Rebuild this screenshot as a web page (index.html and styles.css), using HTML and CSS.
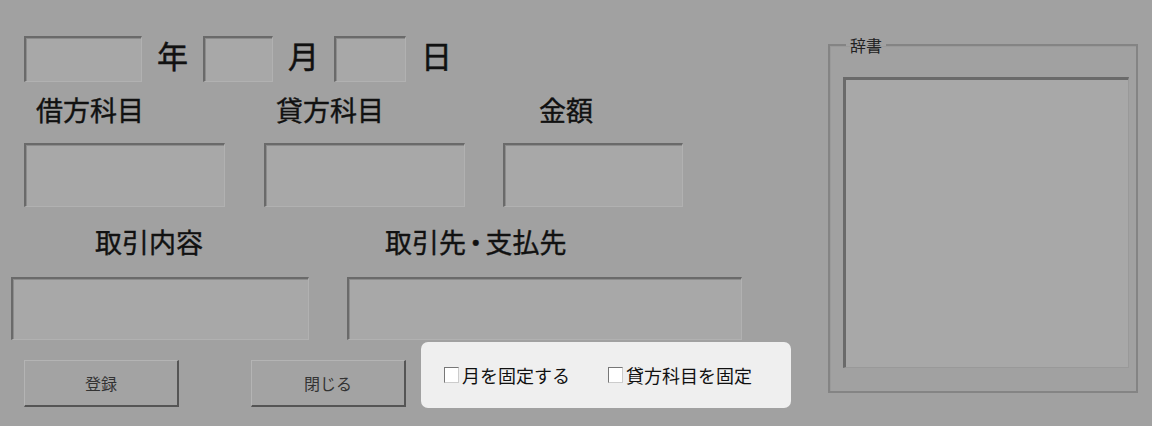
FILE: index.html
```html
<!DOCTYPE html>
<html lang="ja">
  <head>
    <meta charset="utf-8">
    <title>仕訳入力</title>
    <link rel="stylesheet" href="styles.css">
  </head>
  <body>
    <div class="window">
      <div class="main">
        <div class="row date-row">
          <div class="field year"></div>
          <span class="unit">年</span>
          <div class="field month"></div>
          <span class="unit">月</span>
          <div class="field day"></div>
          <span class="unit">日</span>
        </div>
        <div class="row label-row">
          <div class="col col-a"><span class="label">借方科目</span></div>
          <div class="col col-b"><span class="label">貸方科目</span></div>
          <div class="col col-c"><span class="label label-amount">金額</span></div>
        </div>
        <div class="row input-row">
          <div class="field col-a"></div>
          <div class="field col-b"></div>
          <div class="field col-c"></div>
        </div>
        <div class="row label-row2">
          <span class="label label-memo">取引内容</span>
          <span class="label label-partner">取引先<span class="dot">・</span>支払先</span>
        </div>
        <div class="row input-row2">
          <div class="field memo"></div>
          <div class="field partner"></div>
        </div>
        <div class="row bottom-row">
          <button class="btn btn-save">登録</button>
          <button class="btn btn-close">閉じる</button>
          <div class="options">
            <label class="check"><span class="box"></span>月を固定する</label>
            <label class="check"><span class="box"></span>貸方科目を固定</label>
          </div>
        </div>
      </div>
      <div class="side">
        <fieldset class="group">
          <legend>辞書</legend>
          <div class="listbox"></div>
        </fieldset>
      </div>
    </div>
  </body>
</html>
```

FILE: styles.css
```css
* {
  box-sizing: border-box;
}
html, body {
  margin: 0;
  padding: 0;
  background-color: #a1a1a1;
  font-family: 'Noto Sans CJK JP', 'Noto Sans', sans-serif;
  color: #111;
}
.window {
  display: flex;
  width: 1152px;
  height: 426px;
  overflow: hidden;
}
.main {
  width: 800px;
  padding-top: 36px;
}
.row {
  display: flex;
}
.field {
  background-color: #a8a8a8;
  border-top: 2px solid #6a6a6a;
  border-left: 2px solid #6a6a6a;
  border-right: 1px solid #b1b1b1;
  border-bottom: 1px solid #b1b1b1;
  box-shadow: inset 1px 1px 0 #8c8c8c;
}
.date-row {
  padding-left: 24px;
  align-items: center;
  height: 46px;
}
.date-row .field {
  height: 46px;
}
.year {
  width: 118px;
}
.month {
  width: 70px;
}
.day {
  width: 72px;
}
.unit {
  font-size: 31px;
  line-height: 1;
  margin: 0 15px 10px 15px;
  -webkit-text-stroke: 0.5px #111;
}
.label {
  font-size: 27px;
  line-height: 27px;
  display: block;
  -webkit-text-stroke: 0.4px #111;
}
.label-row {
  margin-top: 14px;
  padding-left: 24px;
}
.col-a, .col-b {
  width: 201px;
}
.col-b {
  margin-left: 39px;
}
.col-c {
  width: 180px;
  margin-left: 38px;
}
.label-row .label {
  padding-left: 12px;
}
.label-row .label-amount {
  padding-left: 36px;
}
.input-row {
  margin-top: 20px;
  padding-left: 24px;
}
.input-row .field {
  height: 64px;
}
.label-row2 {
  margin-top: 21px;
  padding-left: 95px;
}
.label-partner {
  margin-left: 182px;
}
.dot {
  font-feature-settings: "palt";
  padding: 0 3px;
}
.input-row2 {
  margin-top: 22px;
  padding-left: 11px;
}
.input-row2 .field {
  height: 63px;
}
.memo {
  width: 298px;
}
.partner {
  width: 395px;
  margin-left: 38px;
}
.bottom-row {
  margin-top: 2px;
  padding-left: 24px;
  align-items: flex-start;
}
.btn {
  margin-top: 18px;
  width: 155px;
  height: 47px;
  background-color: #a3a3a3;
  border-top: 1px solid #b4b4b4;
  border-left: 1px solid #b4b4b4;
  border-right: 2px solid #555;
  border-bottom: 2px solid #555;
  font-family: 'Noto Sans CJK JP', sans-serif;
  font-size: 16px;
  color: #333;
  padding: 0;
}
.btn-close {
  margin-left: 72px;
}
.options {
  margin-left: 15px;
  width: 370px;
  height: 66px;
  background-color: #efefef;
  border-radius: 7px;
  display: flex;
  align-items: center;
  padding-left: 23px;
  gap: 38px;
}
.check {
  display: flex;
  align-items: center;
  font-size: 18px;
  color: #111;
}
.box {
  width: 15px;
  height: 16px;
  background-color: #fff;
  border-top: 1px solid #777;
  border-left: 1px solid #777;
  border-right: 1px solid #ccc;
  border-bottom: 1px solid #ccc;
  margin-right: 3px;
}
.side {
  padding-left: 28px;
}
.group {
  margin: 37px 0 0 0;
  padding: 0;
  width: 310px;
  height: 356px;
  border: 2px solid #848484;
  box-shadow: inset 1px 1px 0 #9a9a9a;
}
.group legend {
  font-size: 16px;
  line-height: 16px;
  padding: 0 4px;
  margin-left: 16px;
  color: #222;
}
.listbox {
  margin: 24px 0 0 13px;
  width: 286px;
  height: 291px;
  background-color: #a8a8a8;
  border-top: 3px solid #6a6a6a;
  border-left: 3px solid #6a6a6a;
  border-right: 1px solid #999;
  border-bottom: 1px solid #999;
}
```
